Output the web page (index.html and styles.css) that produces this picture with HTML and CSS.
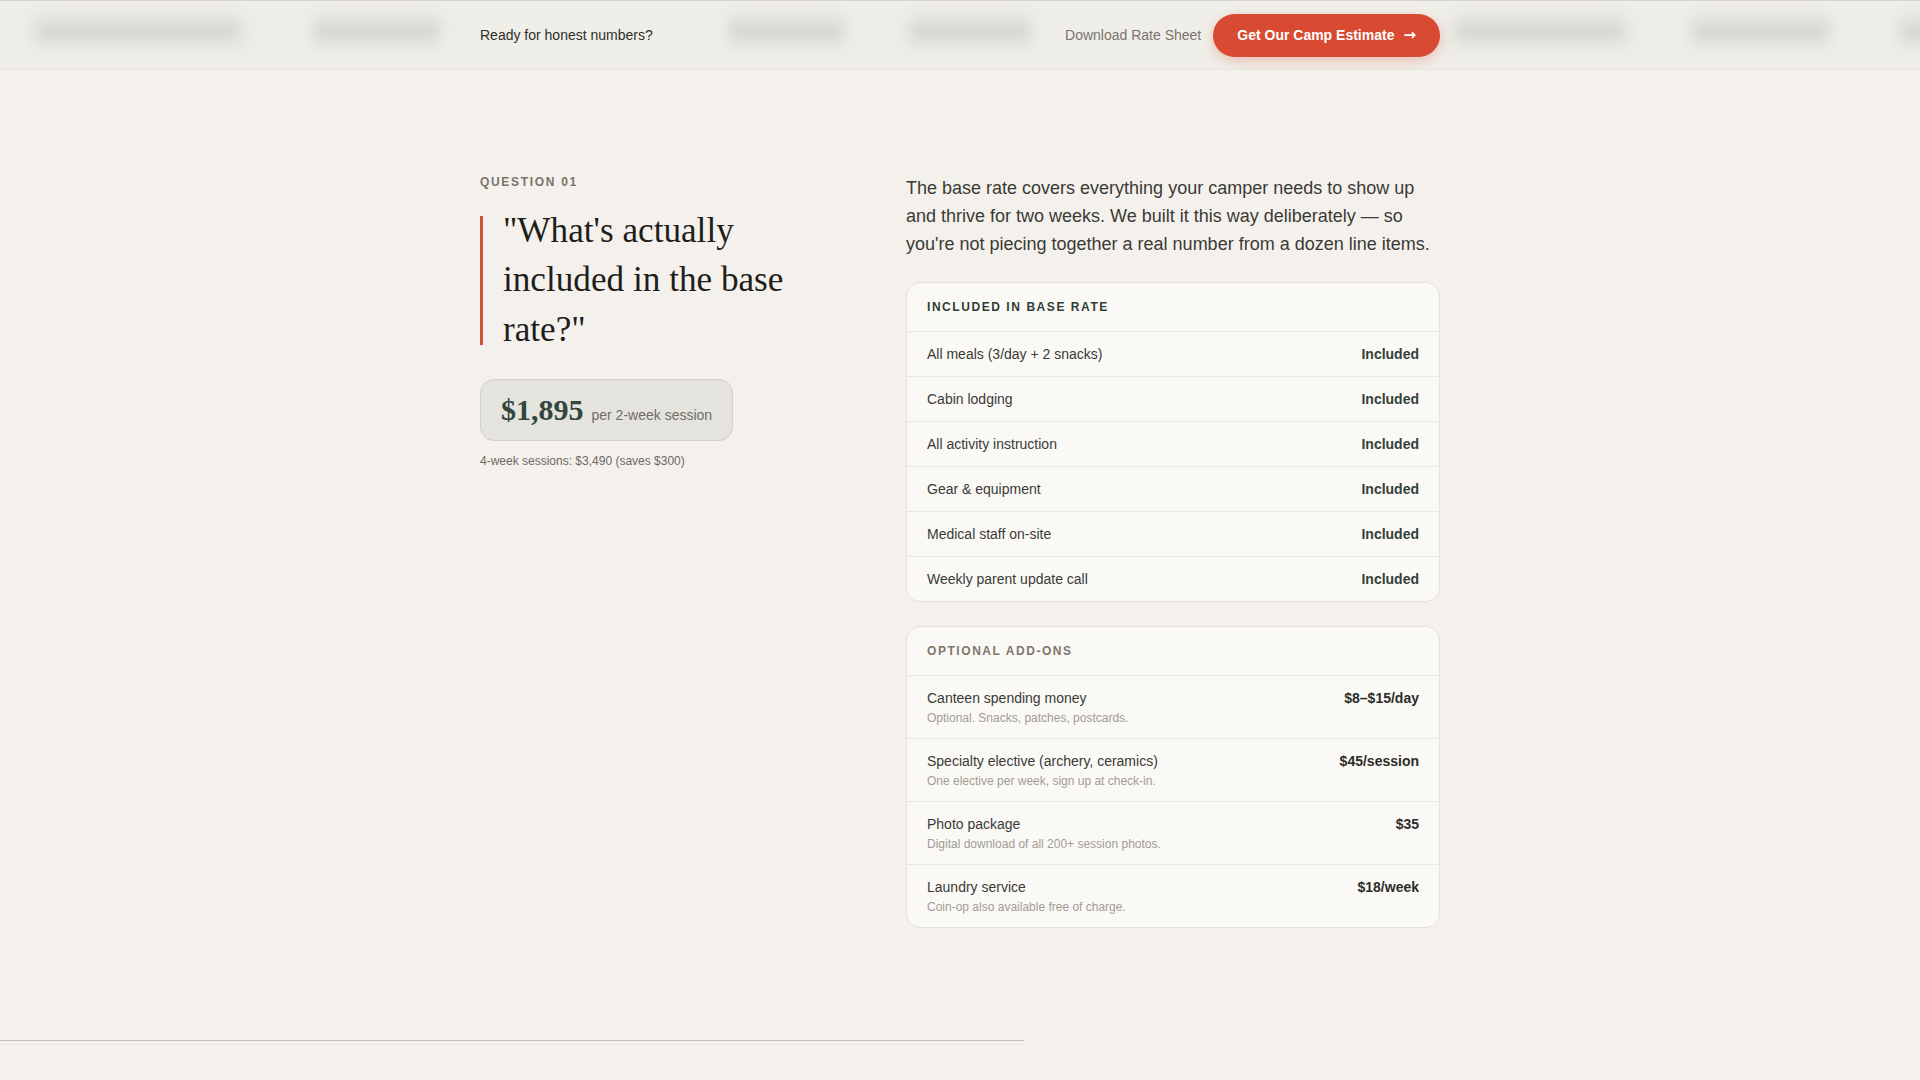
FILE: index.html
```html
<!DOCTYPE html>
<html lang="en">
<head>
<meta charset="utf-8">
<title>Camp Pricing FAQ</title>
<link rel="stylesheet" href="styles.css">
</head>
<body>
<header class="topbar">
  <div class="ghosts" aria-hidden="true">
    <span class="ghost g1"></span>
    <span class="ghost g2"></span>
    <span class="ghost g3"></span>
    <span class="ghost g4"></span>
    <span class="ghost g5"></span>
    <span class="ghost g6"></span>
    <span class="ghost g7"></span>
  </div>
  <div class="topbar-inner">
    <p class="topbar-prompt">Ready for honest numbers?</p>
    <div class="topbar-actions">
      <a class="link-muted" href="#">Download Rate Sheet</a>
      <a class="btn-primary" href="#">Get Our Camp Estimate <span class="arrow">→</span></a>
    </div>
  </div>
</header>

<main class="faq">
  <section class="faq-item">
    <div class="faq-q">
      <p class="eyebrow">QUESTION 01</p>
      <blockquote class="question">"What's actually included in the base rate?"</blockquote>
      <div class="price-pill">
        <span class="price">$1,895</span>
        <span class="price-unit">per 2-week session</span>
      </div>
      <p class="price-note">4-week sessions: $3,490 (saves $300)</p>
    </div>

    <div class="faq-a">
      <p class="lead">The base rate covers everything your camper needs to show up and thrive for two weeks. We built it this way deliberately — so you're not piecing together a real number from a dozen line items.</p>

      <div class="card">
        <div class="card-head card-head--included">INCLUDED IN BASE RATE</div>
        <div class="row"><span class="row-label">All meals (3/day + 2 snacks)</span><span class="row-value">Included</span></div>
        <div class="row"><span class="row-label">Cabin lodging</span><span class="row-value">Included</span></div>
        <div class="row"><span class="row-label">All activity instruction</span><span class="row-value">Included</span></div>
        <div class="row"><span class="row-label">Gear &amp; equipment</span><span class="row-value">Included</span></div>
        <div class="row"><span class="row-label">Medical staff on-site</span><span class="row-value">Included</span></div>
        <div class="row"><span class="row-label">Weekly parent update call</span><span class="row-value">Included</span></div>
      </div>

      <div class="card card--addons">
        <div class="card-head card-head--optional">OPTIONAL ADD-ONS</div>
        <div class="row row--addon">
          <div class="row-text"><span class="row-label">Canteen spending money</span><span class="row-desc">Optional. Snacks, patches, postcards.</span></div>
          <span class="row-price">$8–$15/day</span>
        </div>
        <div class="row row--addon">
          <div class="row-text"><span class="row-label">Specialty elective (archery, ceramics)</span><span class="row-desc">One elective per week, sign up at check-in.</span></div>
          <span class="row-price">$45/session</span>
        </div>
        <div class="row row--addon">
          <div class="row-text"><span class="row-label">Photo package</span><span class="row-desc">Digital download of all 200+ session photos.</span></div>
          <span class="row-price">$35</span>
        </div>
        <div class="row row--addon">
          <div class="row-text"><span class="row-label">Laundry service</span><span class="row-desc">Coin-op also available free of charge.</span></div>
          <span class="row-price">$18/week</span>
        </div>
      </div>
    </div>
  </section>
</main>

<footer class="page-rule">
  <span class="rule-main"></span>
  <span class="rule-faint"></span>
</footer>
</body>
</html>
```

FILE: styles.css
```css
* { box-sizing: border-box; }

body {
  margin: 0;
  background: #f4f1ec;
  font-family: "Liberation Sans", Arial, sans-serif;
  color: #2f2f2b;
}

/* ---------- top bar ---------- */
.topbar {
  position: relative;
  height: 70px;
  border-top: 1px solid #d6d3cd;
  border-bottom: 1px solid #e7e4de;
  background: #f0eee9;
  overflow: hidden;
}

.ghosts {
  position: absolute;
  inset: 0;
  display: flex;
  align-items: center;
  padding-left: 25px;
  padding-bottom: 8px;
  filter: blur(7px);
}

.ghost {
  flex: none;
  height: 42px;
  border-radius: 12px;
  background: #e9e8e3;
  display: flex;
  align-items: center;
  justify-content: center;
}

.ghost::after {
  content: "";
  width: 90%;
  height: 20px;
  border-radius: 10px;
  background: #d7d6d0;
}

.g1 { width: 226px; }
.g2 { width: 141px; margin-left: 55px; }
.g3 { width: 129px; margin-left: 275px; }
.g4 { width: 136px; margin-left: 51px; }
.g5 { width: 190px; margin-left: 407px; }
.g6 { width: 153px; margin-left: 49px; }
.g7 { width: 150px; margin-left: 55px; }

.topbar-inner {
  position: relative;
  width: 960px;
  height: 100%;
  margin: 0 auto;
  display: flex;
  align-items: center;
  justify-content: space-between;
}

.topbar-prompt {
  margin: 0;
  font-size: 14px;
  color: #2e2e2a;
}

.topbar-actions {
  display: flex;
  align-items: center;
  gap: 12px;
}

.link-muted {
  font-size: 14px;
  color: #78756d;
  text-decoration: none;
}

.btn-primary {
  display: inline-flex;
  align-items: center;
  gap: 9px;
  height: 43px;
  padding: 0 24px;
  border-radius: 22px;
  background: #d84a31;
  color: #ffffff;
  font-size: 14px;
  font-weight: 700;
  text-decoration: none;
  box-shadow: 0 4px 12px rgba(216, 74, 49, 0.28);
}

.arrow {
  font-family: "DejaVu Sans", sans-serif;
  font-size: 15px;
  font-weight: 700;
  line-height: 1;
}

/* ---------- FAQ ---------- */
.faq {
  padding: 104px 0 112px;
}

.faq-item {
  width: 960px;
  margin: 0 auto;
  display: grid;
  grid-template-columns: 354px 534px;
  column-gap: 72px;
  align-items: start;
}

.eyebrow {
  margin: 0;
  font-size: 12px;
  line-height: 16px;
  font-weight: 700;
  letter-spacing: 0.14em;
  color: #77756b;
}

.question {
  position: relative;
  margin: 16px 0 0;
  padding-left: 23px;
  font-family: "Liberation Serif", "Times New Roman", serif;
  font-size: 35.2px;
  line-height: 1.4;
  color: #1e1e1b;
}

.question::before {
  content: "";
  position: absolute;
  left: 0;
  top: 10px;
  bottom: 9px;
  width: 3px;
  background: #c9533c;
}

.price-pill {
  display: inline-flex;
  align-items: baseline;
  gap: 8px;
  margin-top: 25px;
  padding: 13px 20px 13px;
  border: 1px solid #d2d0c9;
  border-radius: 14px;
  background: #e4e3de;
}

.price {
  font-family: "Liberation Serif", "Times New Roman", serif;
  font-size: 30px;
  line-height: 34px;
  font-weight: 700;
  color: #34453d;
}

.price-unit {
  font-size: 14px;
  color: #6f6d66;
}

.price-note {
  margin: 11px 0 0;
  font-size: 12px;
  line-height: 18px;
  color: #6c6a63;
}

.lead {
  margin: 1px 0 0;
  font-size: 18px;
  line-height: 1.55;
  color: #3a3a35;
}

.card {
  margin-top: 23px;
  border: 1px solid #e4e1db;
  border-radius: 14px;
  background: #fbf9f5;
  overflow: hidden;
}

.card--addons {
  margin-top: 24px;
}

.card-head {
  padding: 17px 20px;
  font-size: 12px;
  line-height: 14px;
  font-weight: 700;
  letter-spacing: 0.13em;
  border-bottom: 1px solid #ebe8e2;
}

.card-head--included { color: #2f3d36; }
.card-head--optional { color: #7d776c; }

.row {
  display: flex;
  justify-content: space-between;
  align-items: center;
  padding: 12px 20px;
  border-bottom: 1px solid #ebe8e2;
  font-size: 14px;
  line-height: 20px;
}

.row:last-child { border-bottom: none; }

.row-label { color: #3a3a36; }

.row-value {
  font-weight: 700;
  color: #34403a;
}

.row--addon {
  align-items: flex-start;
}

.row-text {
  display: flex;
  flex-direction: column;
}

.row-desc {
  margin-top: 2px;
  font-size: 12px;
  line-height: 16px;
  color: #a09c94;
}

.row-price {
  font-weight: 700;
  color: #2c2c28;
}

/* ---------- bottom rule ---------- */
.page-rule {
  display: flex;
  flex-direction: column;
  gap: 3px;
  width: 1024px;
}

.rule-main {
  display: block;
  height: 1px;
  background: #c4c0b9;
}

.rule-faint {
  display: block;
  height: 1px;
  background: #ebe7e1;
}
```
